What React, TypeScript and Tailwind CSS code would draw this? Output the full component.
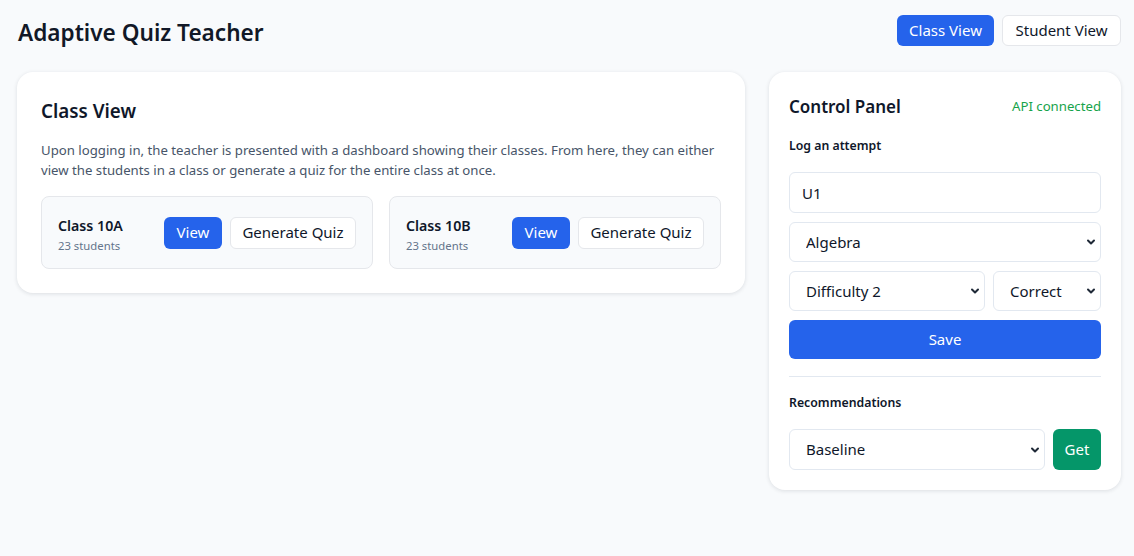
import { ChevronDown } from "lucide-react";

const font = { fontFamily: '"Noto Sans", "Open Sans", Arial, sans-serif' };

function Select({ value, className, h = "h-[40px]" }: { value: string; className?: string; h?: string }) {
  return (
    <div className={`relative ${className ?? ""}`}>
      <select
        defaultValue={value}
        className={`${h} w-full appearance-none rounded-md border border-[#e2e8f0] bg-white pl-4 pr-6 text-[15px] text-[#0f172a] outline-none`}
      >
        <option>{value}</option>
      </select>
      <ChevronDown
        className="pointer-events-none absolute right-[4px] top-1/2 h-[12px] w-[12px] -translate-y-1/2 text-[#1f2937]"
        strokeWidth={4}
      />
    </div>
  );
}

function ClassTile({ name }: { name: string }) {
  return (
    <div className="flex h-[73px] items-center justify-between rounded-lg border border-[#e5e7eb] bg-[#f8fafc] px-4">
      <div className="mt-[5px]">
        <div className="text-[14.2px] font-semibold leading-5 text-[#0f172a]">{name}</div>
        <div className="mt-[2px] text-[11.3px] leading-4 text-[#64748b]">23 students</div>
      </div>
      <div className="flex gap-2">
        <button className="h-8 w-[58px] rounded-md bg-[#2563eb] text-[15px] text-white">View</button>
        <button className="h-8 w-[126px] rounded-md border border-[#e5e7eb] bg-white text-[15px] text-[#0f172a]">
          Generate Quiz
        </button>
      </div>
    </div>
  );
}

export default function App() {
  return (
    <div className="min-h-[556px] bg-[#f8fafc] pl-[17px] pr-[13px] pt-[15px]" style={font}>
      <header className="flex items-start justify-between">
        <h1 className="mt-[2px] pl-px text-[22.6px] font-semibold leading-8 text-[#111827]">Adaptive Quiz Teacher</h1>
        <div className="flex gap-2">
          <button className="h-[31px] w-[97px] rounded-md bg-[#2563eb] text-[15px] text-white">Class View</button>
          <button className="h-[31px] w-[119px] rounded-md border border-[#e5e7eb] bg-white text-[15px] text-[#0f172a]">
            Student View
          </button>
        </div>
      </header>

      <main className="mt-[23px] grid grid-cols-[1fr_352px] items-start gap-6">
        <section className="rounded-2xl bg-white p-6 shadow-[0_1px_4px_rgba(15,23,42,0.12)]">
          <h2 className="text-[18.8px] font-semibold leading-[30px] text-[#0f172a]">Class View</h2>
          <p className="mt-[14px] text-[13.2px] leading-5 text-[#475569]">
            Upon logging in, the teacher is presented with a dashboard showing their classes. From here, they can either
            view the students in a class or generate a quiz for the entire class at once.
          </p>
          <div className="mt-4 grid grid-cols-2 gap-4">
            <ClassTile name="Class 10A" />
            <ClassTile name="Class 10B" />
          </div>
        </section>

        <aside className="rounded-2xl bg-white p-5 shadow-[0_1px_4px_rgba(15,23,42,0.12)]">
          <div className="flex items-center justify-between pt-px">
            <h2 className="text-[17px] font-semibold leading-7 text-[#0f172a]">Control Panel</h2>
            <span className="text-[13.2px] text-[#16a34a]">API connected</span>
          </div>
          <h3 className="mt-[15px] text-[12.3px] font-semibold leading-5 text-[#0f172a]">Log an attempt</h3>
          <div className="mt-4 flex flex-col gap-[9px]">
            <input
              defaultValue="U1"
              className="h-[41px] w-full rounded-md border border-[#e2e8f0] bg-white px-3 text-[15px] text-[#0f172a] outline-none"
            />
            <Select value="Algebra" />
            <div className="flex gap-2">
              <Select value="Difficulty 2" className="flex-1" />
              <Select value="Correct" className="w-[108px]" />
            </div>
            <button className="h-[39px] w-full rounded-md bg-[#2563eb] text-[15px] text-white">Save</button>
          </div>
          <hr className="mt-[17px] border-[#e2e8f0]" />
          <h3 className="mt-4 text-[12.3px] font-semibold leading-5 text-[#0f172a]">Recommendations</h3>
          <div className="mt-4 flex gap-2">
            <Select value="Baseline" className="flex-1" h="h-[41px]" />
            <button className="h-[41px] w-12 rounded-md bg-[#059669] text-[15px] text-white">Get</button>
          </div>
        </aside>
      </main>
    </div>
  );
}
